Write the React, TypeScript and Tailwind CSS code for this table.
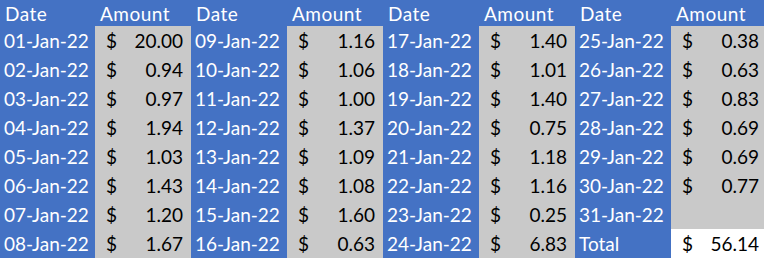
import React from 'react';

type Entry = { date: string; amount: string | null };

const COLUMNS: Entry[][] = [
  [
    { date: '01-Jan-22', amount: '20.00' },
    { date: '02-Jan-22', amount: '0.94' },
    { date: '03-Jan-22', amount: '0.97' },
    { date: '04-Jan-22', amount: '1.94' },
    { date: '05-Jan-22', amount: '1.03' },
    { date: '06-Jan-22', amount: '1.43' },
    { date: '07-Jan-22', amount: '1.20' },
    { date: '08-Jan-22', amount: '1.67' },
  ],
  [
    { date: '09-Jan-22', amount: '1.16' },
    { date: '10-Jan-22', amount: '1.06' },
    { date: '11-Jan-22', amount: '1.00' },
    { date: '12-Jan-22', amount: '1.37' },
    { date: '13-Jan-22', amount: '1.09' },
    { date: '14-Jan-22', amount: '1.08' },
    { date: '15-Jan-22', amount: '1.60' },
    { date: '16-Jan-22', amount: '0.63' },
  ],
  [
    { date: '17-Jan-22', amount: '1.40' },
    { date: '18-Jan-22', amount: '1.01' },
    { date: '19-Jan-22', amount: '1.40' },
    { date: '20-Jan-22', amount: '0.75' },
    { date: '21-Jan-22', amount: '1.18' },
    { date: '22-Jan-22', amount: '1.16' },
    { date: '23-Jan-22', amount: '0.25' },
    { date: '24-Jan-22', amount: '6.83' },
  ],
  [
    { date: '25-Jan-22', amount: '0.38' },
    { date: '26-Jan-22', amount: '0.63' },
    { date: '27-Jan-22', amount: '0.83' },
    { date: '28-Jan-22', amount: '0.69' },
    { date: '29-Jan-22', amount: '0.69' },
    { date: '30-Jan-22', amount: '0.77' },
    { date: '31-Jan-22', amount: null },
  ],
];

const DateCell: React.FC<{ children: React.ReactNode }> = ({ children }) => (
  <div className="flex items-center bg-[#4472c4] pl-[4px] text-white">{children}</div>
);

const AmountCell: React.FC<{ value: string | null; last?: boolean; white?: boolean }> = ({ value, last, white }) => (
  <div
    className={`flex items-center justify-between pl-[11px] text-black ${last ? 'pr-[5px]' : 'pr-[8px]'} ${white ? 'bg-white' : 'bg-[#c9c9c9]'}`}
  >
    {value !== null && (
      <>
        <span>$</span>
        <span>{value}</span>
      </>
    )}
  </div>
);

const App: React.FC = () => {
  const rows = Array.from({ length: 8 }, (_, i) => i);

  return (
    <div
      className="grid h-[258px] w-[764px] grid-cols-[95px_96px_96px_96px_96px_96px_96px_93px] grid-rows-[26px_repeat(8,29px)] bg-[#4472c4] text-[19px] leading-none"
      style={{ fontFamily: 'Lato, "Liberation Sans", sans-serif' }}
    >
      {COLUMNS.map((_, c) => (
        <React.Fragment key={`h${c}`}>
          <div className="flex items-center bg-[#4472c4] pl-[5px] tracking-[0.5px] text-white">Date</div>
          <div className="flex items-center bg-[#4472c4] pl-[5px] tracking-[0.5px] text-white">Amount</div>
        </React.Fragment>
      ))}
      {rows.map(r => (
        <React.Fragment key={r}>
          {COLUMNS.map((col, c) => {
            const last = c === COLUMNS.length - 1;
            const entry = col[r];
            if (!entry) {
              return (
                <React.Fragment key={c}>
                  <DateCell>Total</DateCell>
                  <AmountCell value="56.14" last white />
                </React.Fragment>
              );
            }
            return (
              <React.Fragment key={c}>
                <DateCell>{entry.date}</DateCell>
                <AmountCell value={entry.amount} last={last} />
              </React.Fragment>
            );
          })}
        </React.Fragment>
      ))}
    </div>
  );
};

export default App;
